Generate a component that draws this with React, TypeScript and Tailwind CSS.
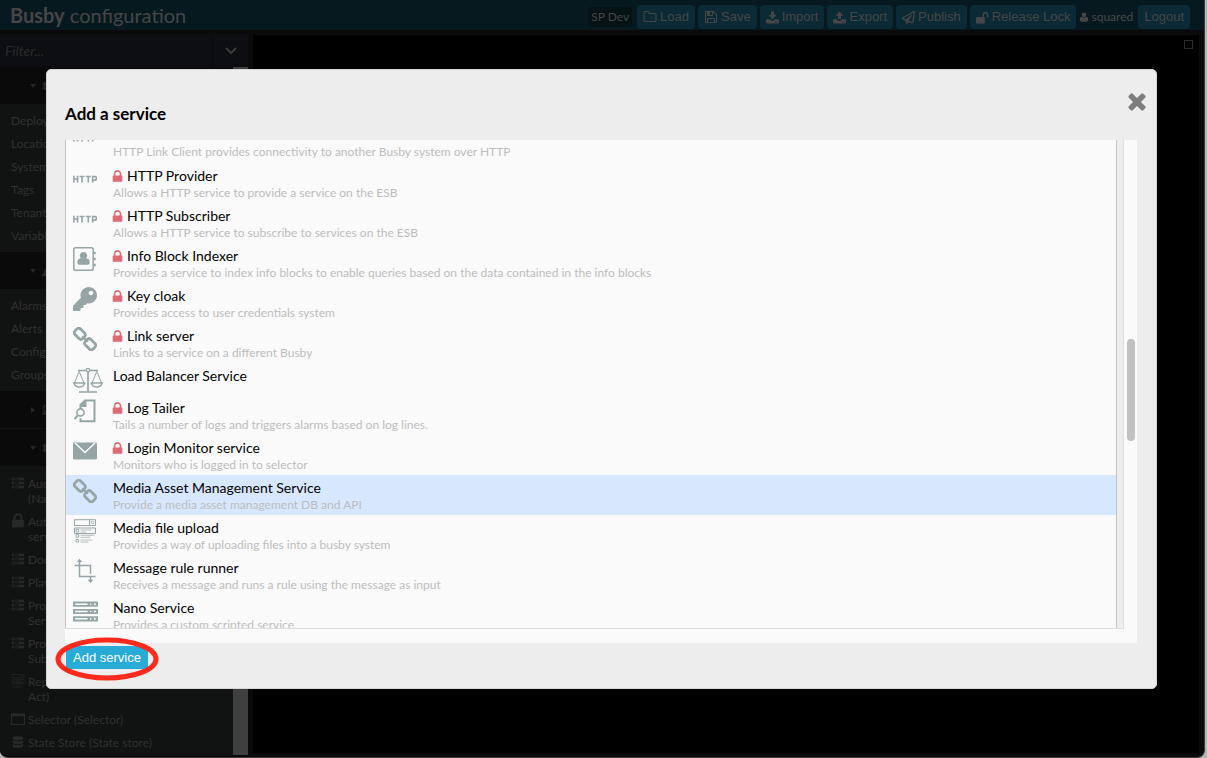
import React from "react";
import { FaRegPaperPlane, FaKey, FaCog, FaDatabase, FaLaptop, FaExclamationTriangle } from "react-icons/fa";

type P = { className?: string };

const Fa4 = ({ d, className }: { d: string; className?: string }) => (
  <svg viewBox="0 0 1792 1792" fill="currentColor" aria-hidden="true" className={className}><path d={d} /></svg>
);
const LOCK = "M640 768h512v-192q0-106-75-181t-181-75-181 75-75 181v192zm832 96v576q0 40-28 68t-68 28h-960q-40 0-68-28t-28-68v-576q0-40 28-68t68-28h32v-192q0-184 132-316t316-132 316 132 132 316v192h32q40 0 68 28t28 68z";
const FOLDER = "M1600 1312v-704q0-40-28-68t-68-28h-704q-40 0-68-28t-28-68v-64q0-40-28-68t-68-28h-320q-40 0-68 28t-28 68v960q0 40 28 68t68 28h1216q40 0 68-28t28-68zm128-704v704q0 92-66 158t-158 66h-1216q-92 0-158-66t-66-158v-960q0-92 66-158t158-66h320q92 0 158 66t66 158v32h672q92 0 158 66t66 158z";
const FLOPPY = "M512 1536h768v-384h-768v384zm896 0h128v-896q0-14-10-38.5t-20-34.5l-281-281q-10-10-34-20t-39-10v416q0 40-28 68t-68 28h-576q-40 0-68-28t-28-68v-416h-128v1280h128v-416q0-40 28-68t68-28h832q40 0 68 28t28 68v416zm-384-928v-320q0-13-9.5-22.5t-22.5-9.5h-192q-13 0-22.5 9.5t-9.5 22.5v320q0 13 9.5 22.5t22.5 9.5h192q13 0 22.5-9.5t9.5-22.5zm640 32v928q0 40-28 68t-68 28h-1344q-40 0-68-28t-28-68v-1344q0-40 28-68t68-28h928q40 0 88 20t76 48l280 280q28 28 48 76t20 88z";
const TIMES = "M1490 1322q0 40-28 68l-136 136q-28 28-68 28t-68-28l-294-294-294 294q-28 28-68 28t-68-28l-136-136q-28-28-28-68t28-68l294-294-294-294q-28-28-28-68t28-68l136-136q28-28 68-28t68 28l294 294 294-294q28-28 68-28t68 28l136 136q28 28 28 68t-28 68l-294 294 294 294q28 28 28 68z";

const Tray = ({ up, className }: P & { up?: boolean }) => (
  <svg viewBox="0 0 14 14" fill="currentColor" aria-hidden="true" className={className}>
    <path fillRule="evenodd" d="M1 9h3.400l1.200 1.200q1.400 1.200 2.800 0L9.600 9H13q1 0 1 1v2.500q0 1-1 1H1q-1 0-1-1V10q0-1 1-1zm9 2.200v1h1v-1zm2 0v1h1v-1z" />
    {up ? <path d="M7 .5l4.300 4.500H8.600v3.500H5.400V5H2.700z" /> : <path d="M5.400.5h3.200V4h2.700L7 8.800 2.700 4h2.700z" />}
  </svg>
);
const Unlock = ({ className }: P) => (
  <svg viewBox="0 0 14 14" fill="currentColor" aria-hidden="true" className={className}>
    <path d="M1 6.500h6V4.200a3.100 3.100 0 0 1 6.300 0v2.300q0 .5-.5.5h-.6q-.5 0-.5-.5V4.200a1.600 1.600 0 0 0-3.200 0v2.300q1 0 1 1v5q0 1-1 1H1q-1 0-1-1v-5q0-1 1-1z" />
  </svg>
);
const User = ({ className }: P) => (
  <svg viewBox="0 0 14 14" fill="currentColor" aria-hidden="true" className={className}>
    <circle cx="7" cy="4" r="3.300" />
    <path d="M4 6.500q3 2.600 6 0 3 .3 3 4.500 0 2.500-2 2.500H3q-2 0-2-2.500 0-4.200 3-4.500z" />
  </svg>
);
const Http = ({ className }: P) => (
  <svg viewBox="0 0 24 24" fill="none" stroke="currentColor" strokeWidth="1.600" aria-hidden="true" className={className}>
    <path d="M.9 8.800v6.700M4.600 8.800v6.700M.9 12h3.700M6.500 9.500h5M9 9.500v6M12.800 9.500h5M15.300 9.500v6M19.700 15.500V9.500H22q1.400 0 1.400 1.800T22 13.100h-2.300" />
  </svg>
);
const AddressBook = ({ className }: P) => (
  <svg viewBox="0 0 24 24" fill="none" stroke="currentColor" aria-hidden="true" className={className}>
    <rect x=".8" y=".8" width="19.400" height="22.400" rx="1.800" strokeWidth="1.500" />
    <path d="M20.500 6h2.200M20.500 12h2.200M20.500 18h2.200" strokeWidth="2.600" />
    <path d="M10.500 5a3.600 3.600 0 0 1 2.600 6.200q3.600.4 3.600 4.500 0 2-2 2H6.300q-2 0-2-2 0-4.100 3.600-4.500A3.600 3.600 0 0 1 10.500 5z" fill="currentColor" stroke="none" />
  </svg>
);
const Chain = ({ className }: P) => (
  <svg viewBox="0 0 24 24" fill="none" stroke="currentColor" strokeWidth="2.700" aria-hidden="true" className={className}>
    <rect x="-5.400" y="-3.900" width="10.800" height="7.800" rx="2.600" transform="translate(6.800 6.800) rotate(45)" />
    <rect x="-5.400" y="-3.900" width="10.800" height="7.800" rx="2.600" transform="translate(17.200 17.200) rotate(45)" />
    <path d="M9.300 9.300l5.400 5.400" strokeWidth="2.200" />
  </svg>
);
const Scales = ({ className }: P) => (
  <svg viewBox="0 0 30 28" fill="none" stroke="currentColor" strokeWidth="1.300" aria-hidden="true" className={className}>
    <path d="M5 3.500h20M15 5v20M6 25h18" strokeWidth="1.700" />
    <circle cx="15" cy="3" r="1.700" fill="#fafafa" />
    <path d="M6.200 4.500L1.500 16M6.200 4.500L11 16M23.800 4.500L19 16M23.800 4.500L28.500 16" strokeWidth="1" />
    <path d="M.8 16h10.900q-1 4-5.400 4t-5.500-4zM18.300 16h10.900q-1 4-5.400 4t-5.500-4z" />
  </svg>
);
const LogSearch = ({ className }: P) => (
  <svg viewBox="0 0 24 24" fill="none" stroke="currentColor" strokeWidth="2" aria-hidden="true" className={className}>
    <path d="M7.500 9.500V6L12 1.500h9.500v20.800H7.500v-3" />
    <path d="M6.500 8L13.500 1v7z" fill="currentColor" stroke="none" />
    <circle cx="7.500" cy="13.500" r="3.600" strokeWidth="1.600" />
    <path d="M4.700 16.500L1.500 20" />
  </svg>
);
const Mail = ({ className }: P) => (
  <svg viewBox="0 0 24 24" fill="currentColor" aria-hidden="true" className={className}>
    <rect y="3.500" width="24" height="17" rx="1.300" />
    <path d="M2 4l10 9.500L22 4" fill="none" stroke="#fafafa" strokeWidth="1.600" />
  </svg>
);
const Form = ({ className }: P) => (
  <svg viewBox="0 0 24 24" fill="none" stroke="currentColor" aria-hidden="true" className={className}>
    <path d="M1.500.7h21v5.800h-21zM16.500.7v5.800M1.500 9h21v5.500h-21z" strokeWidth="1" />
    <circle cx="19.300" cy="3.300" r="1.200" strokeWidth=".8" /><path d="M20 4.200l1.300 1.300" strokeWidth=".8" />
    <path d="M3 10.500h2.600V13H3zM3 15.700h2.600v2.500H3zM3 20.500h2.600V23H3z" strokeWidth=".9" />
    <path d="M7.500 11h11M7.500 13h6M7.500 16.300h14M7.500 18.300h10M7.500 21h12M7.500 23h8" strokeWidth=".7" />
  </svg>
);
const Crop = ({ className }: P) => (
  <svg viewBox="0 0 24 24" fill="none" stroke="currentColor" strokeWidth="1.500" aria-hidden="true" className={className}>
    <path d="M6.500 1v16.500H22.500M1.500 6.500h16v8.500M17.500 17.500v5.500" />
    <path d="M4.600 3l1.900-2 1.900 2M15.600 20.800l1.900 2 1.900-2" />
  </svg>
);
const Servers = ({ className }: P) => (
  <svg viewBox="0 0 24 24" fill="currentColor" aria-hidden="true" className={className}>
    {[2.500, 9.500, 16.500].map((y) => (
      <g key={y}>
        <path fillRule="evenodd" d={`M0 ${y}h24v5H0zM2 ${y + 1.800}v1.400h12v-1.400z`} />
        <circle cx="17" cy={y + 2.500} r=".8" fill="#fafafa" /><circle cx="21" cy={y + 2.500} r="1" fill="#fafafa" />
      </g>
    ))}
  </svg>
);
const WindowIcon = ({ className }: P) => (
  <svg viewBox="0 0 14 14" fill="none" stroke="currentColor" aria-hidden="true" className={className}>
    <path d="M.6 2h12.800v10.500H.6z" strokeWidth="1.200" /><path d="M.6 3h12.800" strokeWidth="2.500" />
  </svg>
);
const MiniServers = ({ className }: P) => (
  <svg viewBox="0 0 14 14" fill="none" stroke="currentColor" aria-hidden="true" className={className}>
    <path d="M1 3h12M1 7h12M1 11h12" strokeWidth="2.600" /><path d="M2 3h6M2 7h6M2 11h6" stroke="#101311" strokeWidth="1" />
  </svg>
);

const actions = [
  { label: "Load", icon: <Fa4 d={FOLDER} className="size-3.5" /> },
  { label: "Save", icon: <Fa4 d={FLOPPY} className="size-3.5" /> },
  { label: "Import", icon: <Tray className="size-[13px]" /> },
  { label: "Export", icon: <Tray up className="size-[13px]" /> },
  { label: "Publish", icon: <FaRegPaperPlane className="size-[13px]" /> },
  { label: "Release Lock", icon: <Unlock className="size-[13px]" /> },
];

const IC = "size-6";
const services = [
  { title: "HTTP Link Client", icon: <Http className={IC} />, text: "HTTP Link Client provides connectivity to another Busby system over HTTP" },
  { title: "HTTP Provider", locked: true, icon: <Http className={IC} />, text: "Allows a HTTP service to provide a service on the ESB" },
  { title: "HTTP Subscriber", locked: true, icon: <Http className={IC} />, text: "Allows a HTTP service to subscribe to services on the ESB" },
  { title: "Info Block Indexer", locked: true, icon: <AddressBook className={IC} />, text: "Provides a service to index info blocks to enable queries based on the data contained in the info blocks" },
  { title: "Key cloak", locked: true, icon: <FaKey className={IC} />, text: "Provides access to user credentials system" },
  { title: "Link server", locked: true, icon: <Chain className={IC} />, text: "Links to a service on a different Busby" },
  { title: "Load Balancer Service", icon: <Scales className="h-7 w-[30px]" /> },
  { title: "Log Tailer", locked: true, icon: <LogSearch className={IC} />, text: "Tails a number of logs and triggers alarms based on log lines." },
  { title: "Login Monitor service", locked: true, icon: <Mail className={IC} />, text: "Monitors who is logged in to selector" },
  { title: "Media Asset Management Service", selected: true, icon: <Chain className={IC} />, text: "Provide a media asset management DB and API" },
  { title: "Media file upload", icon: <Form className={IC} />, text: "Provides a way of uploading files into a busby system" },
  { title: "Message rule runner", icon: <Crop className={IC} />, text: "Receives a message and runs a rule using the message as input" },
  { title: "Nano Service", icon: <Servers className="size-[25px]" />, text: "Provides a custom scripted service" },
];

function GroupHead({ icon, label, closed }: { icon: React.ReactNode; label: string; closed?: boolean }) {
  return (
    <h2 className="flex h-[38px] items-center gap-1.5 border-b border-[#121212] bg-[#0a0a0a] pl-[30px] text-sm text-[#262626]">
      <svg viewBox="0 0 6 6" className="size-1.5" fill="currentColor" aria-hidden="true">{closed ? <path d="M1 0l4 3-4 3z" /> : <path d="M0 1h6L3 5z" />}</svg>
      {icon}{label}
    </h2>
  );
}
function Links({ items }: { items: string[] }) {
  return (
    <ul className="pt-1 pb-[5px]">
      {items.map((i) => <li key={i} className="h-[23px] pl-[11px] text-xs leading-[23px]"><a href="#">{i}</a></li>)}
    </ul>
  );
}

const instances = [
  { icon: <MiniServers className="size-3.5" />, lines: ["Audit service", "(Nano Service)"] },
  { icon: <Fa4 d={LOCK} className="size-[18px] shrink-0" />, lines: ["Authentication", "service"] },
  { icon: <MiniServers className="size-3.5" />, lines: ["Document store"] },
  { icon: <MiniServers className="size-3.5" />, lines: ["Playout"] },
  { icon: <MiniServers className="size-3.5" />, lines: ["Project", "Service"] },
  { icon: <MiniServers className="size-3.5" />, lines: ["Project", "Subscriber"] },
  { icon: <Form className="size-3.5" />, lines: ["Report (Media", "Act)"] },
  { icon: <WindowIcon className="size-3.5" />, lines: ["Selector (Selector)"] },
  { icon: <FaDatabase className="size-3" />, lines: ["State Store (State store)"] },
];

export default function App() {
  return (
    <div className="relative h-screen min-h-[600px] overflow-hidden bg-[#b5b5b5] pr-0.5 font-[Lato,sans-serif]">
      <div className="flex h-full flex-col overflow-hidden rounded-b-lg border-r border-b border-[#3a3a3a] bg-[#0a0a0a]">
        <header className="flex h-[30px] shrink-0 items-center bg-[#06191f] pr-3.5 pl-2.5 text-[#464646]">
          <h1 className="mr-auto text-xl"><b>Busby</b> configuration</h1>
          <div className="flex items-center pt-1">
            <span className="mr-[5px] rounded bg-[#051216] px-[3px] text-xs leading-5">SP Dev</span>
            <div className="flex gap-[3px]">
              {actions.map((a) => (
                <button key={a.label} type="button" className="flex h-6 items-center gap-[3px] rounded bg-[#0b2a36] px-[6px] font-['Liberation_Sans',sans-serif] text-[13px]">{a.icon}{a.label}</button>
              ))}
            </div>
            <span className="mr-[5px] ml-[3px] flex items-center gap-0.5 text-xs"><User className="size-2.5" />squared</span>
            <button type="button" className="h-6 rounded bg-[#0b2a36] px-1.5 font-['Liberation_Sans',sans-serif] text-[13px]">Logout</button>
          </div>
        </header>

        <div className="flex min-h-0 flex-1 pt-1 pr-[5px] pb-0.5">
          <aside className="flex w-[248px] shrink-0 flex-col text-[#303030]">
            <div className="flex h-[33px] shrink-0 bg-[#0d0e11]">
              <input aria-label="Filter" placeholder="Filter..." className="min-w-0 flex-1 bg-transparent px-[5px] text-sm italic outline-none placeholder:text-[#2a2a2c]" />
              <button type="button" aria-label="Filter options" className="flex w-9 items-center justify-center border-l border-[#08090a] text-[#3c3c3c]">
                <svg viewBox="0 0 12 8" className="w-3" fill="none" stroke="currentColor" strokeWidth="2" aria-hidden="true"><path d="M1 1l5 5 5-5" /></svg>
              </button>
            </div>
            <div className="flex min-h-0 flex-1">
              <nav className="min-w-0 flex-1 overflow-hidden bg-[#101311]">
                <GroupHead icon={<FaCog className="size-3" />} label="System" />
                <Links items={["Deployments", "Locations", "Systems", "Tags", "Tenants", "Variables"]} />
                <GroupHead icon={<FaExclamationTriangle className="size-3" />} label="Alarms" />
                <Links items={["Alarms", "Alerts", "Configuration", "Groups"]} />
                <GroupHead closed icon={<FaLaptop className="size-3" />} label="Devices" />
                <GroupHead icon={<FaCog className="size-3" />} label="Services" />
                <ul className="flex flex-col gap-2 pt-[9px] pl-[11px]">
                  {instances.map((s, n) => (
                    <li key={n} className="flex items-start gap-[3px] text-xs leading-[15px]">
                      <span className="flex size-3.5 shrink-0 items-center justify-center text-[#272928]">{s.icon}</span>
                      <a href="#">{s.lines.map((l) => <span key={l} className="block">{l}</span>)}</a>
                    </li>
                  ))}
                </ul>
              </nav>
              <div className="w-[15px] bg-[#3f3f3f]" />
            </div>
          </aside>
          <main className="mt-px mb-0.5 ml-[5px] flex flex-1 justify-end bg-black pt-[5px] pr-1.5">
            <button type="button" aria-label="Maximise" className="size-[9px] border border-[#2c2c2c]" />
          </main>
        </div>
      </div>

      <div className="absolute inset-0 flex pt-[69px] pr-[50px] pb-[69px] pl-[46px]">
        <section role="dialog" aria-label="Add a service" className="flex min-w-0 flex-1 flex-col rounded-[5px] border border-[#d6d6d6] bg-[#ededed] pr-[19px] pb-[19px] pl-[18px]">
          <div className="flex h-[70px] shrink-0 justify-between">
            <h2 className="pt-8 text-[17px] leading-6 font-bold text-black">Add a service</h2>
            <button type="button" aria-label="Close" className="-mr-3 flex h-[62px] w-6 items-center justify-center text-[#7d7d7d]"><Fa4 d={TIMES} className="size-[26px] shrink-0" /></button>
          </div>
          <div className="flex min-h-0 flex-1 bg-[#fafafa] pb-3.5">
            <div className="flex min-w-0 flex-1 overflow-hidden border-b border-[#dedede] bg-[#ededed]">
              <ul className="min-w-0 flex-1 border-x border-[#c4c4c4] bg-[#fafafa]">
                {services.map((s, n) => (
                  <li key={s.title} className={n === 0 ? "-mt-[18px] pb-px" : ""}>
                    <button type="button" className={`flex w-full items-start text-left ${s.text ? "h-10" : "h-8"} ${s.selected ? "bg-[#d7e7fe]" : ""}`}>
                      <span className="w-[47px] shrink-0 pt-1 pl-[7px] text-[#95a5a6]">{s.icon}</span>
                      <span className="min-w-0 pt-1">
                        <span className="flex items-center gap-1 text-sm leading-[18px] text-black">
                          {s.locked && <Fa4 d={LOCK} className="-mr-0.5 -ml-[3px] size-[15px] text-[#dd6a73]" />}{s.title}
                        </span>
                        <span className="block truncate text-xs leading-4 text-[#bdbdbd]">{s.text}</span>
                      </span>
                    </button>
                  </li>
                ))}
              </ul>
              <div className="w-[7px] shrink-0 border-r border-[#dedede]" />
            </div>
            <div className="w-[13px] shrink-0 pt-[199px] pl-[3px]"><div className="h-[102px] w-2 rounded-full bg-[#c1c1c1]" /></div>
          </div>
          <div className="flex shrink-0 pt-[3px] pl-px">
            <div className="relative">
              <button type="button" className="block h-[23px] bg-[#29abd8] px-[7px] font-['Liberation_Sans',sans-serif] text-[13px] text-white">Add service</button>
              <svg viewBox="0 0 104 44" fill="none" aria-hidden="true" className="pointer-events-none absolute -top-[9px] -left-[11px] h-11 w-[104px] max-w-none"><ellipse cx="52" cy="22" rx="49" ry="19" stroke="#fc2a1c" strokeWidth="5" /></svg>
            </div>
          </div>
        </section>
      </div>
    </div>
  );
}
